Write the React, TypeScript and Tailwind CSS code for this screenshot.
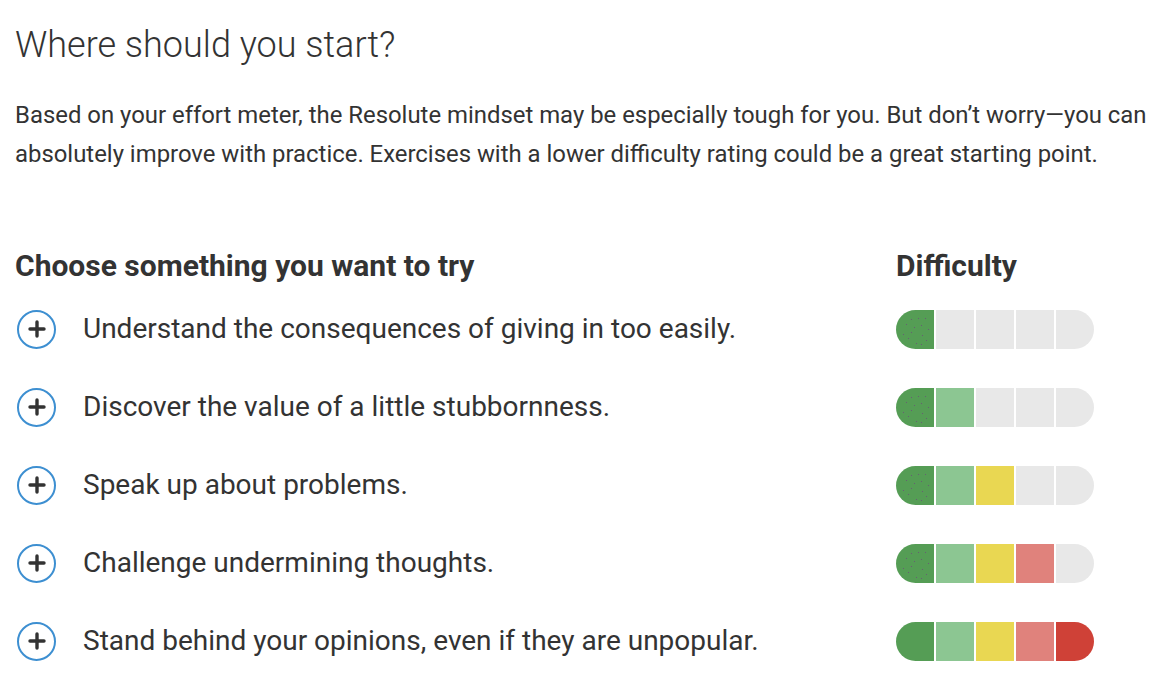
import { Plus } from 'lucide-react';

const ROWS = [
  { text: 'Understand the consequences of giving in too easily.', level: 1 },
  { text: 'Discover the value of a little stubbornness.', level: 2 },
  { text: 'Speak up about problems.', level: 3 },
  { text: 'Challenge undermining thoughts.', level: 4 },
  { text: 'Stand behind your opinions, even if they are unpopular.', level: 5 },
];

const SEG_COLORS = ['bg-[#559d55]', 'bg-[#8cc692]', 'bg-[#e9d752]', 'bg-[#e0827c]', 'bg-[#cf4137]'];

// speckle texture seen on the first green block
function Speckles() {
  const dots = [
    [15, 9], [22, 8], [29, 8], [10, 14], [18, 17], [25, 15], [32, 19],
    [7, 24], [15, 22], [26, 25], [30, 30], [12, 28], [20, 33], [25, 34],
  ];
  return (
    <svg className="absolute inset-0" width="38" height="39" viewBox="0 0 38 39">
      {dots.map(([x, y], i) => (
        <rect key={i} x={x} y={y} width="1" height="1" fill="#6b4f7a" opacity="0.8" />
      ))}
    </svg>
  );
}

function DifficultyBar({ level }: { level: number }) {
  return (
    <div className="flex h-[39px] w-[198px] gap-[2px] overflow-hidden rounded-full">
      {SEG_COLORS.map((color, i) => (
        <div
          key={i}
          className={`relative w-[38px] ${i < level ? color : 'bg-[#e8e8e8]'}`}
        >
          {i === 0 && level < 5 && <Speckles />}
        </div>
      ))}
    </div>
  );
}

export default function App() {
  return (
    <div
      className="min-h-screen bg-white px-[15px] text-[#333]"
      style={{ fontFamily: 'Roboto, "Liberation Sans", sans-serif' }}
    >
      <h1 className="pt-[22px] text-[36px] leading-[46px] font-light">Where should you start?</h1>
      <p className="mt-[28px] text-[23.9px] leading-[39px]">
        Based on your effort meter, the Resolute mindset may be especially tough for you. But don’t
        worry—you can absolutely improve with practice. Exercises with a lower difficulty rating
        could be a great starting point.
      </p>

      <div className="mt-[73px] flex items-center">
        <h2 className="flex-1 text-[30px] leading-[38px] font-bold">Choose something you want to try</h2>
        <h2 className="mr-[61px] w-[198px] text-[30px] leading-[38px] font-bold">Difficulty</h2>
      </div>

      <div className="mt-[5px] flex flex-col">
        {ROWS.map((row) => (
          <div key={row.text} className="flex h-[78px] items-center">
            <div className="ml-[2px] flex h-[39px] w-[39px] items-center justify-center rounded-full border-2 border-[#3d8fd1]">
              <Plus size={24} strokeWidth={3.4} color="#333" />
            </div>
            <span className="ml-[27px] flex-1 text-[28px] leading-[34px]">{row.text}</span>
            <div className="mr-[61px]">
              <DifficultyBar level={row.level} />
            </div>
          </div>
        ))}
      </div>
    </div>
  );
}
